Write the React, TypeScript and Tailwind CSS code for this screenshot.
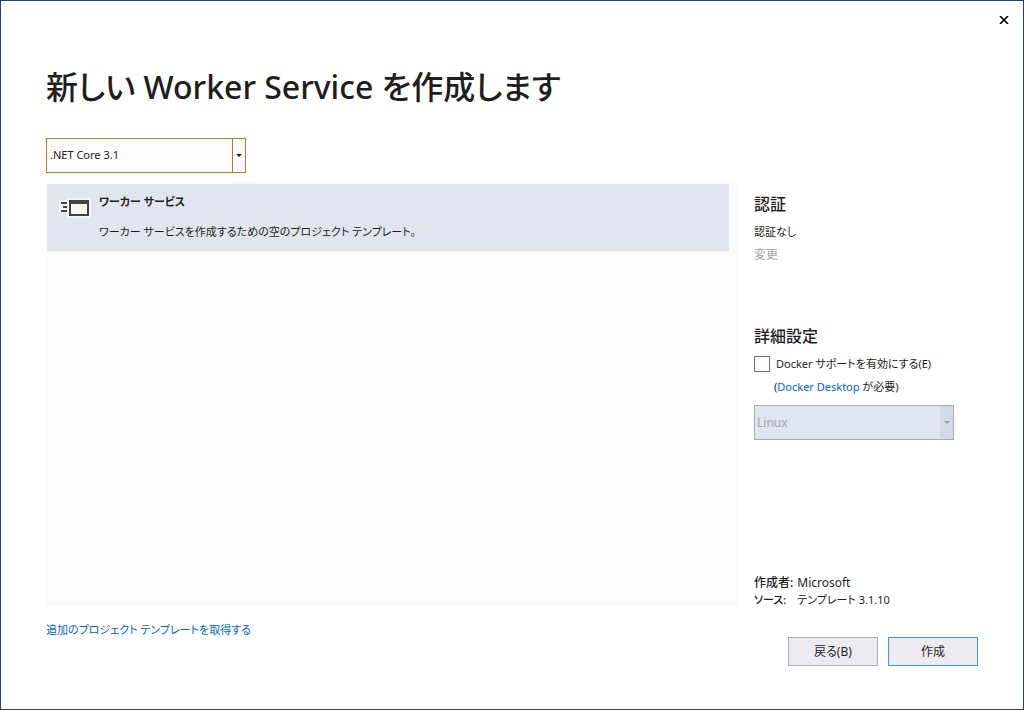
import React from "react";

function DropDown(props: { label: string; options: string[]; disabled?: boolean }) {
  const off = props.disabled;
  return (
    <div className="grid h-[35px] w-[200px] grid-cols-[1fr_14px]">
      <select
        aria-label={props.label}
        disabled={off}
        className={
          "col-span-2 col-start-1 row-start-1 appearance-none border opacity-100 outline-none " +
          (off
            ? "border-[#a2aebb] bg-[#dee6f2] px-0.5 text-xs text-[#a2a4a5]"
            : "border-[#a67f2f] bg-[#fcfcfc] px-[3px] text-[11px] text-[#1e1e1e]")
        }
      >
        {props.options.map((o) => (
          <option key={o}>{o}</option>
        ))}
      </select>
      <span
        className={
          "pointer-events-none col-start-2 row-start-1 flex items-center justify-center " +
          (off
            ? "my-px mr-px bg-[#d3d9e5] text-[#a2a4a5]"
            : "border border-[#a67f2f] text-[#1e1e1e]")
        }
      >
        <svg width="6" height="3" viewBox="0 0 6 3" fill="currentColor" aria-hidden="true">
          <path d="M0 0h6L3 3z" />
        </svg>
      </span>
    </div>
  );
}

function WorkerIcon() {
  return (
    <svg className="mt-3.5 shrink-0" width="32" height="20" viewBox="0 0 32 20" shapeRendering="crispEdges" aria-hidden="true">
      <path fill="#f6f6f6" d="M0 2h8V0h24v20H8v-6H0z" />
      <path fill="#424242" d="M2 4h6v2H2zM4 8h4v2H4zM2 12h6v2H2zM10 2h20v16H10zM12 6v10h16V6z" fillRule="evenodd" />
      <path fill="#f6f6f6" d="M12 6h16v10H12z" />
    </svg>
  );
}

export default function App() {
  return (
    <div className="flex min-h-screen flex-col border border-[#22407a] bg-white font-['Noto_Sans','Noto_Sans_CJK_JP',sans-serif] text-[11px] text-[#1e1e1e] [font-feature-settings:'palt']">
      <header className="flex h-[38px] items-center justify-end pr-[11px]">
        <button type="button" aria-label="閉じる" className="flex size-4 items-center justify-center text-black">
          <svg width="10" height="8" viewBox="0 0 10 8" stroke="currentColor" strokeWidth="1.6" aria-hidden="true">
            <path d="M1 0l8 8M9 0L1 8" />
          </svg>
        </button>
      </header>

      <div className="flex flex-1 flex-col px-[45px] pt-6 pb-[43px]">
        <h1 className="text-[32px] leading-[48px] font-medium">新しい Worker Service を作成します</h1>
        <div className="mt-[27px]">
          <DropDown label="フレームワーク" options={[".NET Core 3.1"]} />
        </div>

        <main className="mt-2.5 flex flex-1 gap-4">
          <ul className="mb-0.5 flex-1 bg-[#fbfbfb] pt-px pr-[9px] pl-px">
            <li className="flex h-[67px] gap-2 bg-[#e2e5ed] pl-3">
              <WorkerIcon />
              <div>
                <h2 className="mt-2 leading-5 font-semibold">ワーカー サービス</h2>
                <p className="mt-2.5 leading-5">ワーカー サービスを作成するための空のプロジェクト テンプレート。</p>
              </div>
            </li>
          </ul>

          <aside className="flex w-56 flex-col pt-[9px]">
            <section>
              <h2 className="text-base leading-6 font-medium">認証</h2>
              <p className="mt-1.5 leading-5">認証なし</p>
              <button type="button" disabled className="mt-[3px] block text-xs leading-5 text-[#a2a4a5]">
                変更
              </button>
            </section>

            <section className="mt-[59px]">
              <h2 className="text-base leading-6 font-medium">詳細設定</h2>
              <div className="mt-1.5 flex items-center gap-1.5">
                <input
                  id="docker"
                  type="checkbox"
                  className="size-4 appearance-none border border-[#717171] bg-[#fefefe] checked:bg-[#717171]"
                />
                <label htmlFor="docker" className="leading-5">
                  Docker サポートを有効にする(E)
                </label>
              </div>
              <p className="mt-[3px] mb-2 pl-5 leading-5">
                (
                <a href="#docker-desktop" className="text-[#0066cc]">
                  Docker Desktop
                </a>{" "}
                が必要)
              </p>
              <DropDown label="OS" options={["Linux"]} disabled />
            </section>

            <dl className="mt-auto grid grid-cols-[auto_1fr] gap-x-1 leading-[17px]">
              <dt className="text-xs leading-[17px] font-medium">作成者:</dt>
              <dd className="text-xs leading-[17px]">Microsoft</dd>
              <dt className="font-medium">ソース:</dt>
              <dd>テンプレート 3.1.10</dd>
            </dl>
          </aside>
        </main>

        <footer className="flex items-start justify-between">
          <a href="#templates" className="mt-3 leading-5 text-[#0066cc]">
            追加のプロジェクト テンプレートを取得する
          </a>
          <div className="mt-[29px] flex gap-2.5 text-xs">
            <button type="button" className="h-[29px] w-[90px] border border-[#acacac] bg-[#ececf0]">
              戻る(B)
            </button>
            <button type="button" className="h-[29px] w-[90px] border border-[#3399ff] bg-[#ececf0]">
              作成
            </button>
          </div>
        </footer>
      </div>
    </div>
  );
}
